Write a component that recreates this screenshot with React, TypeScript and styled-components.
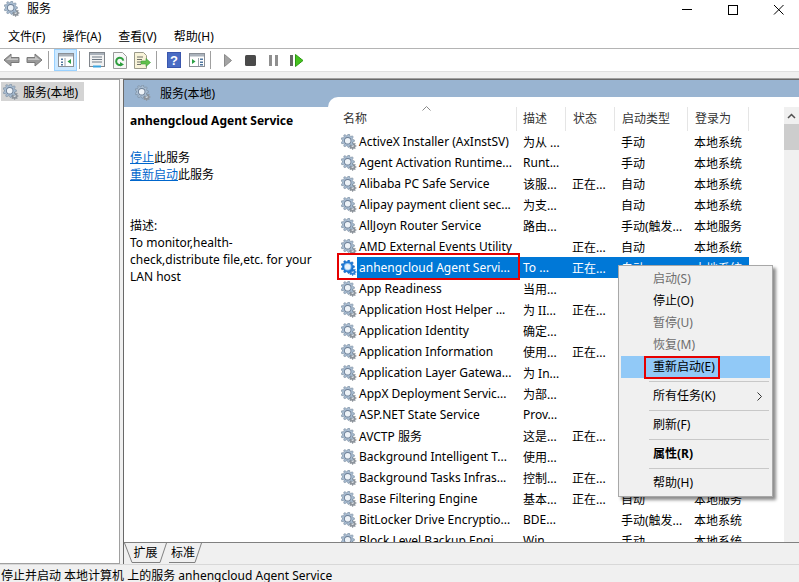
import React from "react";
import styled, { createGlobalStyle } from "styled-components";

const Global = createGlobalStyle`
  html, body { margin: 0; padding: 0; background: #fff; }
  * { box-sizing: border-box; }
  #root { width: 799px; height: 582px; }
`;

const FONT = `"Noto Sans", "Noto Sans CJK SC", sans-serif`;

const Page = styled.div`
  position: relative;
  width: 799px;
  height: 582px;
  overflow: hidden;
  display: flex;
  flex-direction: column;
  background: #f0f0f0;
  font-family: ${FONT};
  font-size: 12px;
  color: #000;
`;
const TitleBar = styled.div`
  height: 22px;
  flex: none;
  background: #fff;
  display: flex;
  align-items: center;
  padding: 0 15px 4px 4px;
`;
const TitleText = styled.span`
  margin-left: 7px;
  flex: 1;
  line-height: 16px;
`;
const WinControls = styled.div`
  display: flex;
  gap: 35px;
  align-items: center;
`;
const MenuBar = styled.div`
  height: 27px;
  flex: none;
  background: #fff;
  display: flex;
  gap: 17px;
  padding: 2px 0 0 8px;
  align-items: center;
  border-bottom: 1px solid #b4b4b4;
`;
const Toolbar = styled.div`
  height: 22px;
  flex: none;
  background: #fff;
  display: flex;
  align-items: center;
`;
const ToolBtn = styled.div<{ $active?: boolean }>`
  width: 23px;
  height: 22px;
  display: flex;
  align-items: center;
  justify-content: center;
  background: ${(p) => (p.$active ? "#cce8ff" : "transparent")};
  border: 1px solid ${(p) => (p.$active ? "#99d1ff" : "transparent")};
`;
const ToolSep = styled.div`
  width: 1px;
  height: 18px;
  margin: 0 5px 0 2px;
  background: #a0a0a0;
`;
const ToolGap = styled.div`
  height: 7px;
  flex: none;
  background: #f0f0f0;
  border-top: 1px solid #e0e0e0;
`;
const Body = styled.div`
  flex: 1;
  min-height: 0;
  display: flex;
  border-top: 1px solid #a0a0a0;
`;
const TreePane = styled.div`
  width: 120px;
  flex: none;
  background: #fff;
  border-right: 1px solid #a0a0a0;
  border-bottom: 1px solid #a0a0a0;
  border-top: 1px solid #a0a0a0;
  padding: 2px 0 0 1px;
`;
const TreeItem = styled.div`
  width: 83px;
  height: 19px;
  display: flex;
  align-items: center;
  gap: 4px;
  padding-left: 2px;
  background: #d4d4d4;
`;
const MainPane = styled.div`
  flex: 1;
  min-width: 0;
  margin-left: 3px;
  display: flex;
  flex-direction: column;
  border-left: 1px solid #696969;
  border-top: 1px solid #696969;
`;
const Content = styled.div`
  flex: 1;
  min-height: 0;
  display: flex;
  background: #99b4d1;
`;
const LeftCol = styled.div`
  width: 204px;
  flex: none;
  display: flex;
  flex-direction: column;
`;
const PaneHeader = styled.div`
  height: 27px;
  flex: none;
  display: flex;
  align-items: center;
  gap: 9px;
  padding: 0 0 2px 11px;
`;
const Desc = styled.div`
  flex: 1;
  background: #fff;
  padding: 5px 6px 0 6px;
  line-height: 17px;
`;
const DescTitle = styled.div`
  font-weight: 700;
  margin-bottom: 20px;
`;
const LinkLine = styled.div``;
const Link = styled.a`
  color: #0066cc;
  text-decoration: underline;
`;
const DescLabel = styled.div`
  margin-top: 34px;
`;
const ListPanel = styled.div`
  flex: 1;
  min-width: 0;
  margin-top: 17px;
  background: #fff;
  border-top-left-radius: 10px;
  display: flex;
  overflow: hidden;
`;
const ListMain = styled.div`
  flex: 1;
  min-width: 0;
  padding-top: 10px;
  overflow: hidden;
`;
const HeaderRow = styled.div`
  position: relative;
  display: flex;
  height: 24px;
`;
const HeaderCell = styled.div<{ $w: number; $pl: number }>`
  width: ${(p) => p.$w}px;
  flex: none;
  padding-left: ${(p) => p.$pl}px;
  line-height: 24px;
  color: #333;
  border-right: 1px solid #e5e5e5;
`;
const SortArrow = styled.svg`
  position: absolute;
  left: 94px;
  top: -1px;
`;
const Row = styled.div`
  display: flex;
  height: 21px;
  padding-left: 13px;
  align-items: center;
`;
const RowIcon = styled.div`
  width: 16px;
  height: 16px;
  flex: none;
`;
const RowBody = styled.div<{ $sel?: boolean }>`
  display: flex;
  height: 21px;
  align-items: center;
  background: ${(p) => (p.$sel ? "#0078d7" : "transparent")};
  color: ${(p) => (p.$sel ? "#fff" : "#000")};
`;
const Cell = styled.div<{ $w: number; $pl: number }>`
  width: ${(p) => p.$w}px;
  flex: none;
  padding-left: ${(p) => p.$pl}px;
  white-space: nowrap;
  overflow: hidden;
`;
const RedBox = styled.div`
  position: absolute;
  border: 2px solid #e60000;
  pointer-events: none;
`;
const RowMark = styled(RedBox)`
  left: 337px;
  top: 253px;
  width: 183px;
  height: 27px;
`;
const ScrollTrack = styled.div`
  width: 15px;
  flex: none;
  margin-top: 10px;
  background: #f0f0f0;
  display: flex;
  flex-direction: column;
`;
const ScrollUp = styled.div`
  height: 17px;
  display: flex;
  align-items: center;
  justify-content: center;
`;
const ScrollThumb = styled.div`
  height: 26px;
  background: #cdcdcd;
`;
const TabBar = styled.div`
  height: 22px;
  flex: none;
  display: flex;
  background: #f0f0f0;
  border-top: 1px solid #808080;
`;
const Tab = styled.div<{ $w: number; $active?: boolean }>`
  position: relative;
  width: ${(p) => p.$w}px;
  height: 20px;
  flex: none;
  text-align: center;
  line-height: 20px;
  margin-left: ${(p) => (p.$active ? 0 : -3)}px;
`;
const TabShape = styled.svg`
  position: absolute;
  left: 0;
  top: 0;
  z-index: 0;
`;
const TabLabel = styled.span`
  position: relative;
  z-index: 1;
`;
const StatusBar = styled.div`
  height: 18px;
  flex: none;
  padding-left: 1px;
  line-height: 21px;
  white-space: nowrap;
  background: #f0f0f0;
  border-top: 1px solid #d8d8d8;
`;
const Menu = styled.div`
  position: absolute;
  left: 618px;
  top: 265px;
  width: 155px;
  height: 232px;
  padding: 2px;
  background: #f0f0f0;
  border: 1px solid #a8a8a8;
  box-shadow: 3px 3px 3px rgba(0, 0, 0, 0.45);
`;
const MenuItem = styled.div<{ $dis?: boolean; $hot?: boolean; $bold?: boolean }>`
  position: relative;
  height: 22px;
  line-height: 22px;
  padding-left: 32px;
  color: ${(p) => (p.$dis ? "#6d6d6d" : "#000")};
  background: ${(p) => (p.$hot ? "#91c9f7" : "transparent")};
  font-weight: ${(p) => (p.$bold ? 700 : 400)};
`;
const MenuMark = styled(RedBox)`
  left: 23px;
  top: 0;
  width: 76px;
  height: 23px;
`;
const MenuSep = styled.div`
  height: 1px;
  margin: 3px 1px 3px 28px;
  background: #c8c8c8;
`;
const Chevron = styled.svg`
  position: absolute;
  right: 8px;
  top: 7px;
`;

const gearPath = (cx: number, cy: number, r: number, rr: number, n: number) => {
  const pts: string[] = [];
  for (let i = 0; i < n; i++) {
    const a = (i / n) * Math.PI * 2;
    const w = Math.PI / n / 1.9;
    [[-w * 1.25, rr], [-w * 0.6, r], [w * 0.6, r], [w * 1.25, rr]].forEach(([d, q]) => {
      pts.push(`${(cx + Math.cos(a + d) * q).toFixed(2)} ${(cy + Math.sin(a + d) * q).toFixed(2)}`);
    });
  }
  return "M" + pts.join("L") + "Z";
};

const Gear = ({ selected, size = 16 }: { selected?: boolean; size?: number }) => (
  <svg width={size} height={size} viewBox="0 0 16 16">
    <path d={gearPath(11.6, 11.9, 3.9, 2.9, 8)} fill={selected ? "#2b7fd4" : "#8c939b"} />
    <circle cx="11.6" cy="11.9" r="1.1" fill={selected ? "#cfe4f8" : "#dfe3e7"} />
    <path
      d={gearPath(6.7, 6.7, 6.7, 5.2, 9)}
      fill={selected ? "#1f7ad6" : "#a9bdd2"}
      stroke={selected ? "#1367bd" : "#76889b"}
      strokeWidth="0.6"
    />
    <circle cx="6.7" cy="6.7" r="3.7" fill={selected ? "#8ec2f0" : "#6f8197"} />
    <circle cx="6.7" cy="6.7" r="2.8" fill={selected ? "#e8f3fc" : "#eef3f8"} />
  </svg>
);

const ArrowIcon = ({ flip }: { flip?: boolean }) => (
  <svg width="17" height="14" viewBox="0 0 17 14" style={flip ? { transform: "scaleX(-1)" } : undefined}>
    <path d="M1 7 L8 1 V4.5 H16 V9.5 H8 V13 Z" fill="#9a9a9a" stroke="#7a7a7a" strokeWidth="1" />
    <path d="M3 7 L8 3 V5.5 H15 V7 Z" fill="#c4c4c4" />
  </svg>
);

const ConsoleTreeIcon = () => (
  <svg width="16" height="14" viewBox="0 0 16 14">
    <rect x=".5" y=".5" width="15" height="13" fill="#fff" stroke="#8a8f96" />
    <rect x="1" y="1" width="14" height="2.5" fill="#aab2bb" />
    <path d="M3 5.5h2v1.5H3zM3 8.5h2V10H3zM3 11h2v1.5H3z" fill="#51779f" />
    <path d="M7 5v8" stroke="#9aa2ac" />
    <path d="M13 6v5L9.5 8.5Z" fill="#2aa043" />
  </svg>
);
const PropertiesIcon = () => (
  <svg width="16" height="16" viewBox="0 0 16 16">
    <rect x=".5" y=".5" width="15" height="14" fill="#f2f2f2" stroke="#80858b" />
    <rect x="1" y="1" width="14" height="2" fill="#aab2bb" />
    <path d="M3 5h10M3 7.5h10M3 10h10" stroke="#6f7a86" />
    <rect x="4" y="13.5" width="8" height="2" fill="#3aa4e0" />
  </svg>
);
const RefreshIcon = () => (
  <svg width="14" height="17" viewBox="0 0 14 17">
    <path d="M.5.5H9.5L13.5 4.5V16.5H.5Z" fill="#f7f7f7" stroke="#9a9a9a" />
    <path d="M10.3 8.6A3.6 3.6 0 1 0 9 12.2" fill="none" stroke="#2f9e3f" strokeWidth="2" />
    <path d="M7 14.5V10l4 2.4Z" fill="#2f9e3f" />
  </svg>
);
const ExportIcon = () => (
  <svg width="17" height="17" viewBox="0 0 17 17">
    <path d="M.5.5H9.5L12.5 3.5V16.5H.5Z" fill="#f8f3d8" stroke="#9a9a8a" />
    <path d="M3 5h6M3 7.5h5M3 10h4M3 12.5h4" stroke="#6f7068" />
    <path d="M7 9h5V6.5l4.5 4-4.5 4V12H7Z" fill="#62c04a" stroke="#3e9a3a" strokeWidth=".6" />
  </svg>
);
const HelpIcon = () => (
  <svg width="14" height="16" viewBox="0 0 14 16">
    <rect width="14" height="16" fill="#3a56ad" />
    <rect x="1" y="1" width="12" height="14" fill="#4a6cc4" />
    <text x="7" y="13" textAnchor="middle" fontSize="13" fontWeight="700" fontFamily="Liberation Sans" fill="#fff">
      ?
    </text>
  </svg>
);
const ActionPaneIcon = () => (
  <svg width="16" height="14" viewBox="0 0 16 14">
    <rect x=".5" y=".5" width="15" height="13" fill="#fff" stroke="#8a8f96" />
    <rect x="1" y="1" width="14" height="2.5" fill="#aab2bb" />
    <path d="M3 6v5l3.5-2.5Z" fill="#2aa043" />
    <path d="M9.5 5v8" stroke="#9aa2ac" />
    <path d="M11 5.5h3V7h-3zM11 8.5h3V10h-3zM11 11h3v1.5h-3z" fill="#51779f" />
  </svg>
);
const PlayIcon = () => (
  <svg width="8" height="13" viewBox="0 0 8 13">
    <path d="M.5.5 7.5 6.5.5 12.5Z" fill="#a4a4a4" stroke="#8a8a8a" />
  </svg>
);
const StopIcon = () => (
  <svg width="11" height="11" viewBox="0 0 11 11">
    <rect width="11" height="11" rx="1.5" fill="#4a4a4a" />
  </svg>
);
const PauseIcon = () => (
  <svg width="9" height="11" viewBox="0 0 9 11">
    <path d="M0 0h3v11H0zM6 0h3v11H6z" fill="#8f8f8f" />
  </svg>
);
const ResumeIcon = () => (
  <svg width="14" height="13" viewBox="0 0 14 13">
    <path d="M0 1h3v11H0z" fill="#666" />
    <path d="M5.5.5 13 6.5 5.5 12.5Z" fill="#46c21f" stroke="#2e9a14" />
  </svg>
);

type R = [string, string, string, string, string];
const rows: R[] = [
  ["ActiveX Installer (AxInstSV)", "为从 ...", "", "手动", "本地系统"],
  ["Agent Activation Runtime...", "Runt...", "", "手动", "本地系统"],
  ["Alibaba PC Safe Service", "该服...", "正在...", "自动", "本地系统"],
  ["Alipay payment client sec...", "为支...", "", "自动", "本地系统"],
  ["AllJoyn Router Service", "路由...", "", "手动(触发...", "本地服务"],
  ["AMD External Events Utility", "", "正在...", "自动", "本地系统"],
  ["anhengcloud Agent Servi...", "To ...", "正在...", "自动", "本地系统"],
  ["App Readiness", "当用...", "", "手动", "本地系统"],
  ["Application Host Helper ...", "为 II...", "正在...", "自动", "本地系统"],
  ["Application Identity", "确定...", "", "手动(触发...", "本地服务"],
  ["Application Information", "使用...", "正在...", "手动(触发...", "本地系统"],
  ["Application Layer Gatewa...", "为 In...", "", "手动", "本地服务"],
  ["AppX Deployment Servic...", "为部...", "", "手动", "本地系统"],
  ["ASP.NET State Service", "Prov...", "", "手动", "网络服务"],
  ["AVCTP 服务", "这是...", "正在...", "手动(触发...", "本地服务"],
  ["Background Intelligent T...", "使用...", "", "手动", "本地系统"],
  ["Background Tasks Infras...", "控制...", "正在...", "自动", "本地系统"],
  ["Base Filtering Engine", "基本...", "正在...", "自动", "本地服务"],
  ["BitLocker Drive Encryptio...", "BDE...", "", "手动(触发...", "本地系统"],
  ["Block Level Backup Engi...", "Win...", "", "手动", "本地系统"],
];

export default function App() {
  return (
    <Page>
      <Global />
      <TitleBar>
        <Gear />
        <TitleText>服务</TitleText>
        <WinControls>
          <svg width="11" height="11" viewBox="0 0 11 11">
            <path d="M1 5.5h10" stroke="#000" />
          </svg>
          <svg width="11" height="11" viewBox="0 0 11 11">
            <rect x="1.5" y="1.5" width="9" height="9" fill="none" stroke="#000" />
          </svg>
          <svg width="11" height="11" viewBox="0 0 11 11">
            <path d="M1 1l9.5 9.5M10.5 1 1 10.5" stroke="#000" />
          </svg>
        </WinControls>
      </TitleBar>
      <MenuBar>
        <span>文件(F)</span>
        <span>操作(A)</span>
        <span>查看(V)</span>
        <span>帮助(H)</span>
      </MenuBar>
      <Toolbar>
        <ToolBtn><ArrowIcon /></ToolBtn>
        <ToolBtn><ArrowIcon flip /></ToolBtn>
        <ToolSep />
        <ToolBtn $active><ConsoleTreeIcon /></ToolBtn>
        <ToolSep />
        <ToolBtn><PropertiesIcon /></ToolBtn>
        <ToolBtn><RefreshIcon /></ToolBtn>
        <ToolBtn><ExportIcon /></ToolBtn>
        <ToolSep />
        <ToolBtn><HelpIcon /></ToolBtn>
        <ToolBtn><ActionPaneIcon /></ToolBtn>
        <ToolSep />
        <ToolBtn><PlayIcon /></ToolBtn>
        <ToolBtn><StopIcon /></ToolBtn>
        <ToolBtn><PauseIcon /></ToolBtn>
        <ToolBtn><ResumeIcon /></ToolBtn>
      </Toolbar>
      <ToolGap />
      <Body>
        <TreePane>
          <TreeItem>
            <Gear />
            <span>服务(本地)</span>
          </TreeItem>
        </TreePane>
        <MainPane>
          <Content>
            <LeftCol>
              <PaneHeader>
                <Gear />
                <span>服务(本地)</span>
              </PaneHeader>
              <Desc>
                <DescTitle>anhengcloud Agent Service</DescTitle>
                <LinkLine><Link>停止</Link>此服务</LinkLine>
                <LinkLine><Link>重新启动</Link>此服务</LinkLine>
                <DescLabel>描述:</DescLabel>
                <div>To monitor,health-check,distribute file,etc. for your LAN host</div>
              </Desc>
            </LeftCol>
            <ListPanel>
              <ListMain>
                <HeaderRow>
                  <HeaderCell $w={189} $pl={15}>名称</HeaderCell>
                  <HeaderCell $w={49} $pl={6}>描述</HeaderCell>
                  <HeaderCell $w={49} $pl={7}>状态</HeaderCell>
                  <HeaderCell $w={73} $pl={7}>启动类型</HeaderCell>
                  <HeaderCell $w={61} $pl={7}>登录为</HeaderCell>
                  <SortArrow width="9" height="5" viewBox="0 0 9 5">
                    <path d="M.5 4.5 4.5.5l4 4" fill="none" stroke="#8a8a8a" />
                  </SortArrow>
                </HeaderRow>
                {rows.map((r, i) => (
                  <Row key={r[0]}>
                    <RowIcon><Gear selected={i === 6} /></RowIcon>
                    <RowBody $sel={i === 6}>
                      <Cell $w={160} $pl={2}>{r[0]}</Cell>
                      <Cell $w={48} $pl={6}>{r[1]}</Cell>
                      <Cell $w={49} $pl={7}>{r[2]}</Cell>
                      <Cell $w={73} $pl={7}>{r[3]}</Cell>
                      <Cell $w={62} $pl={7}>{r[4]}</Cell>
                    </RowBody>
                  </Row>
                ))}
              </ListMain>
              <ScrollTrack>
                <ScrollUp>
                  <svg width="9" height="6" viewBox="0 0 9 6">
                    <path d="M1 5 4.5 1.5 8 5" fill="none" stroke="#505050" strokeWidth="1.5" />
                  </svg>
                </ScrollUp>
                <ScrollThumb />
              </ScrollTrack>
            </ListPanel>
          </Content>
          <TabBar>
            <Tab $w={43} $active>
              <TabShape width="43" height="20" viewBox="0 0 43 20">
                <path d="M.5 0 8 19.5H36L42.5 0" fill="#f0f0f0" stroke="#808080" />
              </TabShape>
              <TabLabel>扩展</TabLabel>
            </Tab>
            <Tab $w={38}>
              <TabShape width="38" height="20" viewBox="0 0 38 20">
                <path d="M5 19.5H31L37.5 0" fill="none" stroke="#808080" />
              </TabShape>
              <TabLabel>标准</TabLabel>
            </Tab>
          </TabBar>
        </MainPane>
      </Body>
      <StatusBar>停止并启动 本地计算机 上的服务 anhengcloud Agent Service</StatusBar>
      <RowMark />
      <Menu>
        <MenuItem $dis>启动(S)</MenuItem>
        <MenuItem>停止(O)</MenuItem>
        <MenuItem $dis>暂停(U)</MenuItem>
        <MenuItem $dis>恢复(M)</MenuItem>
        <MenuItem $hot>
          重新启动(E)
          <MenuMark />
        </MenuItem>
        <MenuSep />
        <MenuItem>
          所有任务(K)
          <Chevron width="5" height="9" viewBox="0 0 5 9">
            <path d="M.5.5l4 4-4 4" fill="none" stroke="#333" />
          </Chevron>
        </MenuItem>
        <MenuSep />
        <MenuItem>刷新(F)</MenuItem>
        <MenuSep />
        <MenuItem $bold>属性(R)</MenuItem>
        <MenuSep />
        <MenuItem>帮助(H)</MenuItem>
      </Menu>
    </Page>
  );
}
